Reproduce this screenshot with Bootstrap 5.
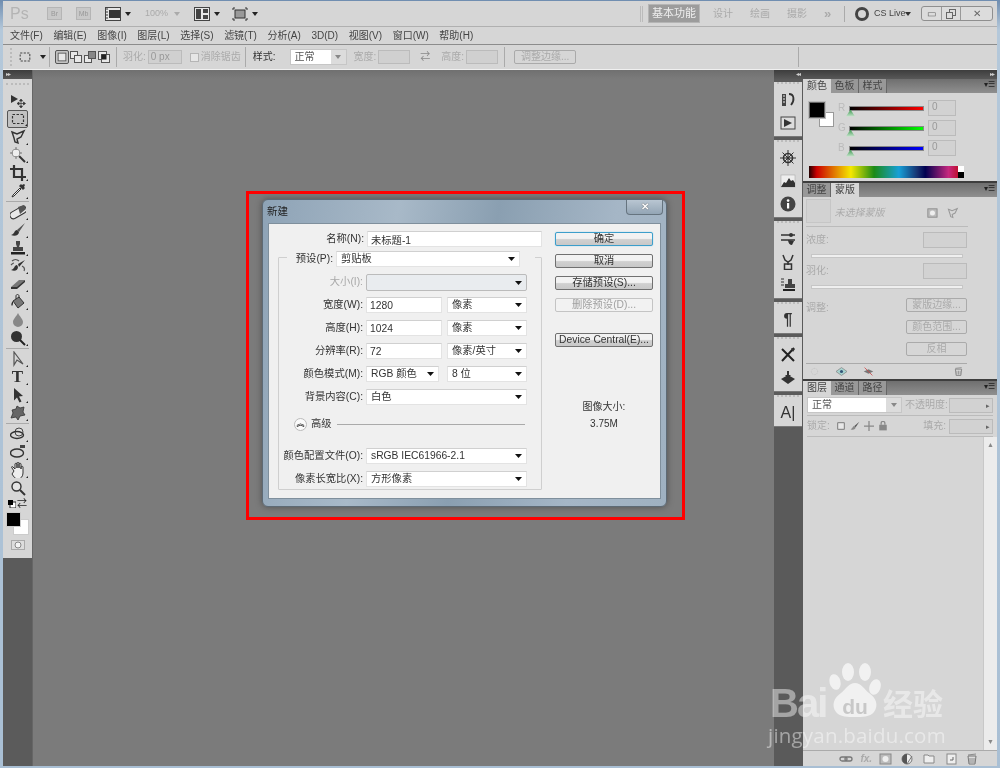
<!DOCTYPE html>
<html lang="zh-CN">
<head>
  <meta charset="UTF-8">
  <title>Photoshop CS5 - 新建</title>
  <link href="https://cdn.jsdelivr.net/npm/bootstrap@5.3.0/dist/css/bootstrap.min.css" rel="stylesheet">
  <style>
    html, body { margin: 0; height: 768px; overflow: hidden; background: #b9cadb; }
    body { font-family: "Liberation Sans", "Noto Sans CJK SC", sans-serif; font-size: 10px; line-height: 1.2; color: #333; }
    .ps-win { position: relative; width: 1000px; height: 768px; padding: 1px 3px 2px 3px; background: linear-gradient(#6f8db0, #b4c8da 30px, #a9bfd4); filter: blur(.3px); }

    /* top bars */
    .ps-app { height: 26px; background: #d6d6d6; border-bottom: 1px solid #b0b0b0; color: #aaa; padding-left: 7px; }
    .ps-logo { width: 33px; font-size: 16px; font-weight: 400; color: #b4b4b4; }
    .ps-mini { width: 15px; height: 13px; margin-right: 14px; border: 1px solid #b5b5b5; background: #c8c8c8; font-size: 7px; line-height: 11px; text-align: center; color: #999; }
    .ps-appic { width: 16px; height: 14px; margin-right: 4px; color: #444; }
    .ps-tri { width: 0; height: 0; border: 3px solid transparent; border-top: 4px solid #222; border-bottom: 0; }
    .ps-t1 { margin-right: 14px; }
    .ps-t1b { margin-right: 12px; }
    .ps-zoom { width: 22px; margin-right: 7px; color: #aaa; font-size: 9px; }
    .ps-t-gray { border-top-color: #aaa; margin-right: 14px; }
    .ps-grip { width: 3px; height: 16px; margin-right: 5px; border-left: 1px solid #bbb; border-right: 1px solid #bbb; }
    .ps-work { width: 52px; height: 19px; background: #9c9c9c; border: 1px solid #b5b5b5; color: #eee; font-size: 11px; line-height: 17px; text-align: center; margin-right: 13px; }
    .ps-wk2 { width: 37px; color: #aaa; font-size: 10px; }
    .ps-more { width: 20px; color: #aaa; font-size: 13px; font-weight: 700; }
    .ps-vsep { width: 1px; height: 16px; background: #aaa; }
    .ps-live-r { width: 14px; height: 14px; border: 3px solid #444; border-radius: 50%; margin: 0 5px 0 10px; }
    .ps-live { color: #444; width: 30px; font-size: 9px; white-space: nowrap; }
    .ps-live-t { margin: 0 10px 0 1px; border-top-color: #333; }
    .ps-ctl { width: 72px; height: 15px; margin-right: 4px; border: 1px solid #8f8f8f; border-radius: 3px; background: #dcdcdc; }
    .ps-ctl span { height: 100%; border-right: 1px solid #999; color: #666; }
    .ps-c1 { width: 20px; } .ps-c2 { width: 19px; } .ps-c3 { flex: 1; border-right: 0 !important; }

    .ps-menu { height: 17px; background: #d6d6d6; padding-left: 7px; color: #444; }
    .ps-menu span { margin-right: 10.6px; white-space: nowrap; }

    .ps-opts { height: 26px; background: #d6d6d6; border-top: 1px solid #8c8c8c; border-bottom: 1px solid #f0f0f0; color: #aaa; padding-left: 4px; }
    .ps-osep { width: 1px; height: 20px; background: #aaa; }
    .ps-og { width: 3px; height: 18px; margin: 0 5px 0 3px; border-left: 2px dotted #bbb; }
    .ps-ic14 { width: 14px; height: 14px; color: #444; }
    .ps-o1 { margin-right: 4px; }
    .ps-o2 { margin: 0 3px 0 4px; }
    .ps-o3 { margin-left: 5px; }
    .ps-mode { width: 14px; height: 14px; margin-right: 0; color: #555; }
    .ps-modeon { border: 1px solid #555; border-radius: 2px; background: #c3c3c3; }
    .ps-o4 { margin-left: 6px; margin-right: 2px; }
    .ps-ofield { width: 34px; height: 14px; border: 1px solid #bbb; background: #d0d0d0; padding-left: 2px; line-height: 12px; color: #999; }
    .ps-ocheck { width: 9px; height: 9px; margin: 0 2px 0 8px; border: 1px solid #b5b5b5; background: #e6e6e6; }
    .ps-o5 { margin-right: 4px; }
    .ps-dark { color: #333; margin: 0 14px 0 7px; }
    .ps-osel { width: 57px; height: 16px; border: 1px solid #c6c6c6; background: #fff; padding-left: 4px; line-height: 14px; color: #555; }
    .ps-selb { width: 15px; height: 14px; background: #dcdcdc; }
    .ps-selb .ps-tri { border-top-color: #888; }
    .ps-o6 { margin: 0 2px 0 7px; }
    .ps-obox { width: 32px; height: 14px; border: 1px solid #bbb; background: #d0d0d0; }
    .ps-swap { width: 10px; height: 10px; margin: 0 11px 0 10px; color: #888; }
    .ps-o7 { margin: 0 2px 0 0; }
    .ps-o8 { margin-left: 6px; }
    .ps-obtn { width: 62px; height: 14px; margin: 0 222px 0 9px; padding: 0; border: 1px solid #b9b9b9; border-radius: 2px; background: #e8e8e8; color: #999; font-size: 10px; line-height: 12px; --bs-btn-disabled-opacity: 1; }

    /* main area */
    .ps-main { flex: 1; min-height: 0; }
    .ps-head { height: 9px; background: linear-gradient(#3d3d3d, #585858); color: #ccc; font-size: 6px; line-height: 9px; padding: 0 3px; letter-spacing: -1px; }
    .ps-hl { margin-left: 19px; }
    .ps-tools { width: 29px; background: #5b5b5b; }
    .ps-tbody { height: 479px; background: #d6d6d6; padding-top: 1px; }
    .ps-tgrip { height: 8px; margin: 3px 3px 1px; border-top: 2px dotted #bbb; }
    .ps-tl { position: relative; height: 18px; color: #333; }
    .ps-tl svg { width: 16px; height: 16px; }
    .ps-tl::after { content: ""; position: absolute; right: 4px; bottom: 1px; border: 1.5px solid transparent; border-right-color: #222; border-bottom-color: #222; }
    .ps-tlon { margin: 0 4px; border: 1px solid #555; border-radius: 2px; background: #c2c2c2; }
    .ps-tlon::after { right: 0; }
    .ps-plain::after { display: none; }
    .ps-tt { font-family: "Liberation Serif", serif; font-size: 17px; font-weight: 700; }
    .ps-tsep { height: 1px; margin: 1px 3px 1px 3px; background: #aaa; }
    .ps-minis { height: 11px; margin-top: 1px; padding: 0 5px; color: #222; }
    .ps-swatch { position: relative; height: 28px; margin: 3px 0 0 3px; }
    .ps-fg { position: absolute; left: 0; top: 0; width: 15px; height: 15px; background: #000; border: 1px solid #ccc; z-index: 1; }
    .ps-bg { position: absolute; left: 7px; top: 7px; width: 16px; height: 16px; background: #fff; border: 1px solid #ccc; }
    .ps-qm { width: 14px; height: 10px; margin: 0 auto 0; border: 1px solid #aaa; background: #ddd; color: #777; }

    .ps-canvas { position: relative; flex: 1; background: #7b7b7b; border-left: 1px solid #666; }
    .ps-chead { height: 9px; background: linear-gradient(#707070, #7b7b7b); }

    /* dialog */
    .ps-dlg { position: absolute; left: 229px; top: 129px; width: 405px; height: 308px; padding: 23px 5px 7px 5px; border: 1px solid #5d6a75; border-radius: 6px; background: linear-gradient(100deg, #8ea3b6 0%, #a8b9c8 30%, #8a9fb1 52%, #a5b6c6 78%, #9fb1c1 100%); box-shadow: 0 0 6px rgba(40,40,40,.5); }
    .ps-dtitle { position: absolute; left: 4px; top: 5px; color: #222; font-size: 10.5px; }
    .ps-dclose { position: absolute; right: 3px; top: 0; width: 37px; height: 15px; border: 1px solid #66747f; border-top: 0; border-radius: 0 0 4px 4px; background: linear-gradient(#b9c6d2, #93a5b5); color: #fff; font-size: 10px; line-height: 13px; text-align: center; font-weight: 700; text-shadow: 0 0 1px #222; }
    .ps-dbody { height: 100%; background: #f0f0f0; border: 1px solid #7f8f9c; color: #333; font-size: 10.3px; }
    .ps-dleft { width: 286px; padding-top: 7px; }
    .ps-drow { height: 16px; margin-bottom: 7px; }
    .ps-lab { width: 98px; padding-right: 3px; text-align: right; white-space: nowrap; }
    .ps-in, .ps-sel { height: 16px; min-height: 16px; padding: 0 3px; border: 1px solid #e3e3e3; border-top-color: #d0d0d0; border-radius: 0; background-color: #fff; color: #333; font-size: 10.3px; line-height: 14px; box-shadow: none; }
    .ps-sel { padding: 0 14px 0 4px; background-image: url("data:image/svg+xml,%3Csvg xmlns='http://www.w3.org/2000/svg' viewBox='0 0 7 4'%3E%3Cpath d='M0 0h7L3.5 4z' fill='%23111'/%3E%3C/svg%3E"); background-position: right 4px center; background-size: 7px 4px; }
    .ps-w174 { width: 175px; }
    .ps-w161 { width: 161px; }
    .ps-w76 { width: 76px; }
    .ps-w80 { width: 80px; margin-left: 5px; }
    .ps-w73 { width: 73px; margin-right: 8px; }
    .ps-w184 { width: 184px; }
    .ps-dis { height: 17px; background-color: #e6e6e6; border: 1px solid #bbb; border-radius: 2px; opacity: 1; }
    .ps-gray { color: #a8a8a8; }
    .ps-group { position: relative; height: 233px; margin: 10px 0 0 9px; width: 264px; border: 1px solid #cfcfcf; border-radius: 1px; }
    .ps-glegend { margin: -7px 0 7px 8px; padding: 0; width: 248px; background: #f0f0f0; }
    .ps-glab { width: 49px; padding-right: 3px; text-align: right; white-space: nowrap; }
    .ps-group .ps-lab { width: 87px; }
    .ps-r1 { margin-bottom: 6px; height: 17px; }
    .ps-adv { height: 16px; margin: 11px 0 16px 15px; }
    .ps-advb { width: 13px; height: 13px; border: 1px solid #bbb; border-radius: 50%; background: #fafafa; font-size: 8px; line-height: 10px; text-align: center; font-weight: 700; color: #222; margin-right: 4px; }
    .ps-advl { width: 188px; height: 1px; margin-left: 5px; background: #aaa; }
    .ps-dright { width: 98px; padding-top: 8px; }
    .ps-dbtn { height: 14px; width: 98px; margin-bottom: 8px; padding: 0; border: 1px solid #707070; border-radius: 2px; background: linear-gradient(#f2f2f2 45%, #d0d0d0 55%, #c8c8c8); color: #333; font-size: 10.3px; line-height: 12px; white-space: nowrap; }
    .ps-dbtn:hover { background: #ddd; color: #333; }
    .ps-dok { border-color: #3c9ecb; box-shadow: 0 0 1px #58b5de; }
    .ps-doff, .ps-doff:disabled { border-color: #c4c4c4; background: #f2f2f2; color: #a0a0a0; opacity: 1; }
    .ps-d2 { margin-top: 13px; }
    .ps-dinfo { margin-top: 43px; text-align: center; font-size: 10px; line-height: 17px; }

    .ps-redbox { position: absolute; left: 213px; top: 121px; width: 439px; height: 329px; border: 3px solid #f00; }

    /* dock */
    .ps-side { width: 223px; background: #5a5a5a; }
    .ps-srow { flex: 1; min-height: 0; }
    .ps-dock { width: 28px; background: #5a5a5a; margin-left: 0; }
    .ps-dk { background: #d6d6d6; border-bottom: 1px solid #777; padding-bottom: 2px; }
    .ps-dkg { height: 3px; margin: 3px; border-top: 2px dotted #bbb; }
    .ps-dki { height: 23px; color: #333; }
    .ps-dki svg { width: 16px; height: 16px; }
    .ps-panels { width: 194px; margin-left: 1px; background: #d6d6d6; }
    .ps-ptabs { height: 14px; flex: none; background: linear-gradient(#6f6f6f, #8f8f8f); color: #333; }
    .ps-ptab { width: 28px; height: 14px; border-right: 1px solid #666; background: #989898; text-align: center; font-size: 10px; line-height: 13px; color: #444; }
    .ps-ptabon { background: #d6d6d6; border-right: 0; }
    .ps-menuic { margin: 0 2px 0 auto; color: #222; font-size: 8px; line-height: 12px; }
    .ps-cbody { height: 90px; flex: none; padding: 5px 0 0 6px; border-bottom: 2px solid #3e3e3e; }
    .ps-cswatch { position: relative; width: 29px; height: 25px; margin-top: 4px; }
    .ps-cfg { position: absolute; left: 0; top: 0; width: 16px; height: 16px; background: #000; border: 1px solid #666; z-index: 1; box-shadow: 0 0 0 1px #bbb; }
    .ps-cbg { position: absolute; left: 10px; top: 10px; width: 15px; height: 15px; background: #fff; border: 1px solid #999; }
    .ps-crow { height: 20px; }
    .ps-clab { width: 11px; color: #bbb; text-align: left; }
    .ps-slide { position: relative; width: 75px; height: 5px; border: 1px solid #888; margin-right: 4px; }
    .ps-sr { background: linear-gradient(90deg, #000, #f00); }
    .ps-sg { background: linear-gradient(90deg, #000, #0f0); }
    .ps-sb { background: linear-gradient(90deg, #000, #00f); }
    .ps-thumb { position: absolute; left: -4px; top: 3px; width: 9px; height: 7px; background: linear-gradient(#3f9a52, #cfe9d4); clip-path: polygon(50% 0, 100% 100%, 0 100%); }
    .ps-cbox { width: 28px; height: 16px; border: 1px solid #bbb; background: #d2d2d2; color: #999; padding-left: 3px; line-height: 12px; font-size: 10px; }
    .ps-spec { position: relative; width: 155px; height: 12px; margin-top: 8px; background: linear-gradient(90deg, #200 0, #c00 5%, #e8a000 20%, #f5e800 27%, #1c8a16 42%, #16a0d8 58%, #16306f 70%, #000050 75%, #c6287f 90%, #b00 100%); }
    .ps-spec::after { content: ""; position: absolute; right: 0; top: 0; width: 6px; height: 100%; background: linear-gradient(#fff 50%, #000 50%); }
    .ps-mbody { height: 184px; flex: none; padding: 2px 0 0 3px; border-bottom: 2px solid #3e3e3e; color: #aaa; }
    .ps-mtop2 { height: 28px; margin-right: 29px; border-bottom: 1px solid #bbb; }
    .ps-mthumb { width: 25px; height: 24px; border: 1px solid #c6c6c6; background: #d2d2d2; margin-right: 4px; }
    .ps-mtext { width: 94px; font-style: italic; color: #aaa; }
    .ps-mic { width: 12px; height: 12px; margin-right: 9px; color: #999; }
    .ps-mrow { height: 16px; margin-top: 5px; width: 161px; }
    .ps-mbox { width: 44px; height: 16px; border: 1px solid #bbb; background: #d2d2d2; }
    .ps-mslide { height: 4px; width: 152px; margin: 6px 0 0 5px; background: #efefef; border: 1px solid #c6c6c6; }
    .ps-mbtns { width: 161px; height: 66px; margin-top: 9px; }
    .ps-mbtn { width: 61px; height: 14px; margin-bottom: 8px; padding: 0; border: 1px solid #bbb; border-radius: 2px; background: #e8e8e8; color: #999; font-size: 10px; line-height: 12px; --bs-btn-disabled-opacity: 1; }
    .ps-mfoot { height: 16px; width: 161px; border-top: 1px solid #aaa; margin-top: -1px; padding: 0 3px; }
    .ps-mfoot svg { width: 11px; height: 11px; }
    .ps-lbody { flex: 1; min-height: 0; color: #aaa; }
    .ps-lrow { height: 21px; flex: none; margin: 0 4px; border-bottom: 1px solid #bbb; white-space: nowrap; }
    .ps-lsel { width: 95px; height: 16px; flex: none; border: 1px solid #c6c6c6; background: #fff; padding-left: 4px; color: #555; line-height: 14px; margin-right: 3px; }
    .ps-lfield { width: 44px; height: 15px; flex: none; border: 1px solid #bbb; background: #d2d2d2; margin-left: auto; text-align: right; color: #666; font-size: 7px; line-height: 13px; padding-right: 2px; }
    .ps-llock { margin-right: 6px; }
    .ps-lic { width: 10px; height: 10px; margin-right: 4px; color: #888; }
    .ps-lr { margin-left: auto; }
    .ps-lr + .ps-lfield { margin-left: 3px; }
    .ps-list { flex: 1; min-height: 0; }
    .ps-lmain { flex: 1; }
    .ps-scroll { width: 14px; background: #ececec; border-left: 1px solid #c8c8c8; color: #888; font-size: 7px; text-align: center; }
    .ps-lfoot { height: 16px; flex: none; border-top: 1px solid #aaa; padding: 0 18px 0 36px; }
    .ps-lfoot svg { width: 14px; height: 12px; color: #777; }

    /* baidu watermark */
    .ps-wm { position: absolute; left: 770px; top: 656px; width: 180px; height: 94px; color: rgba(255,255,255,.45); pointer-events: none; z-index: 5; font-family: "Open Sans", "Noto Sans CJK SC", sans-serif; }
    .ps-wm1 { height: 66px; }
    .ps-bai { width: 56px; height: 38px; font-size: 40px; font-weight: 700; line-height: 38px; letter-spacing: -2px; font-family: "Liberation Sans", sans-serif; margin-top: 28px; white-space: nowrap; }
    .ps-paw { width: 56px; height: 66px; flex: none; }
    .ps-jy { font-size: 30px; line-height: 40px; margin: 26px 0 0 1px; font-family: "Noto Sans CJK SC", sans-serif; font-weight: 700; white-space: nowrap; }
    .ps-wm2 { font-size: 20.5px; line-height: 26px; margin: 0 0 0 -2px; letter-spacing: .2px; white-space: nowrap; }
  </style>
</head>
<body>
<svg width="0" height="0" class="d-none">
  <defs>
    <symbol id="i-move" viewBox="0 0 16 16"><path d="M1 2l7 4-7 4z" fill="currentColor"/><path d="M11 7v7M8 10.500h7M11 6l-1.500 2h3zM11 15l-1.500-2h3zM7 10.500l2-1.500v3zM15.500 10.500l-2-1.500v3z" stroke="currentColor" fill="currentColor" stroke-width=".7"/></symbol>
    <symbol id="i-marq" viewBox="0 0 16 16"><rect x="2.500" y="3.500" width="11" height="9" fill="none" stroke="currentColor" stroke-width="1.200" stroke-dasharray="2.500 1.500"/></symbol>
    <symbol id="i-lasso" viewBox="0 0 16 16"><path d="M2 3l5 2 7-3-3 6-4 2 1 4-3-1-1-4z" fill="none" stroke="currentColor" stroke-width="1.400"/></symbol>
    <symbol id="i-wand" viewBox="0 0 16 16"><path d="M9 9l6 6" stroke="currentColor" stroke-width="2"/><circle cx="6" cy="6" r="4" fill="#eee" stroke="#999"/><path d="M6 0v3M6 9v3M0 6h3M9 6h3" stroke="#777"/></symbol>
    <symbol id="i-crop" viewBox="0 0 16 16"><path d="M4 0v12h12M0 4h12v12" fill="none" stroke="currentColor" stroke-width="2.200"/></symbol>
    <symbol id="i-drop" viewBox="0 0 16 16"><path d="M10 5l-7 7-1 2 2-1 7-7z" fill="#eee" stroke="currentColor"/><path d="M9 3l4 4 2-2-1-1 1-2-1-1-2 1-1-1z" fill="currentColor"/></symbol>
    <symbol id="i-heal" viewBox="0 0 16 16"><rect x="-1" y="5" width="18" height="7" rx="3.500" transform="rotate(-30 8 8)" fill="#e8e8e8" stroke="currentColor"/><path d="M8 3l6-2 2 4-6 5z" fill="#555"/></symbol>
    <symbol id="i-brush" viewBox="0 0 16 16"><path d="M15 1L7 8l2 2z" fill="#555"/><path d="M7 8c-3 0-2 4-6 5 4 2 8 0 8-3z" fill="currentColor"/></symbol>
    <symbol id="i-stamp" viewBox="0 0 16 16"><path d="M6 1h4v3l-1 3h4v4H3V7h4L6 4z" fill="#444"/><rect x="1" y="12" width="14" height="2.500" fill="#222"/></symbol>
    <symbol id="i-hist" viewBox="0 0 16 16"><path d="M15 2L8 6l1 3zM7 7c-3 0-2 4-6 5 4 2 7 0 7-3z" fill="currentColor"/><path d="M2 3c2-2 5-2 7 0M1 7c1-1 2-2 3-2M12 8c2 1 3 3 2 5" fill="none" stroke="#555" stroke-width="1.200"/></symbol>
    <symbol id="i-erase" viewBox="0 0 16 16"><path d="M1 11l8-7h6l-8 8H1z" fill="#777"/><path d="M1 11h6v2H1zM7 11l8-7v2l-8 7z" fill="#333"/></symbol>
    <symbol id="i-buck" viewBox="0 0 16 16"><path d="M3 7l6-4 5 6-6 5z" fill="#777" stroke="#333"/><path d="M3 7c-2 2-2 4-1 5 1-1 1-3 1-5z" fill="#222"/><path d="M6 5V2c0-2 3-2 3 0v2" fill="none" stroke="#333"/></symbol>
    <symbol id="i-blur" viewBox="0 0 16 16"><path d="M8 1c2 4 5 6 5 9a5 5 0 0 1-10 0c0-3 3-5 5-9z" fill="#888"/></symbol>
    <symbol id="i-dodge" viewBox="0 0 16 16"><circle cx="6.500" cy="6.500" r="5.500" fill="#333"/><path d="M10 10l5 5" stroke="#222" stroke-width="2"/></symbol>
    <symbol id="i-pen" viewBox="0 0 16 16"><path d="M4 1v13l3-5 6 4z" fill="none" stroke="#555" stroke-width="1.200"/></symbol>
    <symbol id="i-arrow" viewBox="0 0 16 16"><path d="M4 1l9 8-4 .5 2.500 5-2 1-2.500-5-3 3z" fill="currentColor"/></symbol>
    <symbol id="i-shape" viewBox="0 0 16 16"><path d="M7 1l3 2 4-1-1 5 2 3-5 1-2 4-2-3-5 1 2-5-1-3 4-1z" fill="#666" stroke="#333" stroke-width=".8"/></symbol>
    <symbol id="i-rot" viewBox="0 0 16 16"><circle cx="9" cy="6" r="4" fill="#ddd" stroke="#444"/><ellipse cx="7" cy="9" rx="6.500" ry="3.500" fill="none" stroke="#333" stroke-width="1.400"/></symbol>
    <symbol id="i-orb" viewBox="0 0 16 16"><ellipse cx="7" cy="9" rx="6.500" ry="4" fill="none" stroke="#333" stroke-width="1.400"/><path d="M10 1h5v3h-5z" fill="#444"/></symbol>
    <symbol id="i-hand" viewBox="0 0 16 16"><path d="M4 9L2 6c-1-1 0-2 1-1l2 2V2c0-1 2-1 2 0v4-5c0-1 2-1 2 0v5-4c0-1 2-1 2 0v5-2c0-1 2-1 2 0v6c0 3-2 6-5 6-3 0-4-2-6-5z" fill="#eee" stroke="#333" stroke-width="1"/></symbol>
    <symbol id="i-zoom" viewBox="0 0 16 16"><circle cx="6.500" cy="6.500" r="4.500" fill="#e4e4e4" stroke="#333" stroke-width="1.400"/><path d="M10 10l5 5" stroke="#333" stroke-width="2"/></symbol>
    <symbol id="i-book" viewBox="0 0 16 16"><path d="M2 2h4v12H2z" fill="#444"/><path d="M3 4h2M3 7h2M3 10h2" stroke="#eee"/><path d="M9 2c5 0 6 6 2 11" fill="none" stroke="#333" stroke-width="1.800"/></symbol>
    <symbol id="i-play" viewBox="0 0 16 16"><rect x="1" y="2" width="14" height="12" fill="#ddd" stroke="#444"/><path d="M4 4l8 4-8 4z" fill="#333"/></symbol>
    <symbol id="i-wheel" viewBox="0 0 16 16"><circle cx="8" cy="8" r="4.500" fill="none" stroke="#333" stroke-width="1.600"/><path d="M8 0v16M0 8h16M2.500 2.500l11 11M13.500 2.500l-11 11" stroke="#333"/><circle cx="8" cy="8" r="1.500" fill="#333"/></symbol>
    <symbol id="i-histo" viewBox="0 0 16 16"><rect x="1" y="2" width="14" height="12" fill="#eee" stroke="#aaa" stroke-width=".6"/><path d="M1 14l3-5 2 1 3-5 2 3 2-1 2 3v4z" fill="#333"/></symbol>
    <symbol id="i-info" viewBox="0 0 16 16"><circle cx="8" cy="8" r="7.500" fill="#444"/><rect x="7" y="7" width="2.200" height="5.500" fill="#fff"/><circle cx="8.100" cy="4.600" r="1.300" fill="#fff"/></symbol>
    <symbol id="i-sliders" viewBox="0 0 16 16"><path d="M1 4h14M1 9h14" stroke="#333" stroke-width="1.500"/><circle cx="11" cy="4" r="2" fill="#333"/><path d="M8 9l6 1-2 4c-2 0-4-2-4-5z" fill="#333"/></symbol>
    <symbol id="i-usb" viewBox="0 0 16 16"><path d="M3 1l2 5 3 2 3-2 2-5M8 8v3" fill="none" stroke="#333" stroke-width="1.500"/><rect x="4.500" y="10" width="7" height="5.500" fill="none" stroke="#333" stroke-width="1.500"/></symbol>
    <symbol id="i-stamp2" viewBox="0 0 16 16"><path d="M1 2h3M1 5h3M1 8h3" stroke="#333"/><path d="M8 2h4v5h3v4H5V7h3z" fill="#444"/><rect x="3" y="12" width="12" height="2" fill="#222"/></symbol>
    <symbol id="i-tools" viewBox="0 0 16 16"><path d="M2 2l12 12M14 1L2 14" stroke="#222" stroke-width="2"/><path d="M11 1l4 1-2 3z" fill="#333"/></symbol>
    <symbol id="i-box" viewBox="0 0 16 16"><path d="M1 9l7-4 7 4-7 5z" fill="#333"/><path d="M8 1v7" stroke="#333" stroke-width="2"/><path d="M5 5l3 3 3-3" fill="#333"/></symbol>
    <symbol id="i-film" viewBox="0 0 16 14"><rect x=".5" y=".5" width="15" height="13" fill="#e6e6e6" stroke="currentColor"/><path d="M4 3h11v8H4z" fill="#333"/><path d="M1 2h2M1 5h2M1 8h2M1 11h2" stroke="#333"/></symbol>
    <symbol id="i-arr" viewBox="0 0 16 14"><rect x=".5" y=".5" width="15" height="13" fill="#e6e6e6" stroke="currentColor"/><path d="M2 2h5v10H2zM9 2h5v4H9zM9 8h5v4H9z" fill="#444"/></symbol>
    <symbol id="i-scr" viewBox="0 0 16 14"><rect x="3" y="3" width="10" height="8" fill="#999" stroke="#333"/><path d="M1 3V1h2M13 1h2v2M15 11v2h-2M3 13H1v-2" fill="none" stroke="#333"/></symbol>
    <symbol id="i-restore" viewBox="0 0 10 10"><rect x="3.500" y=".5" width="6" height="6" fill="none" stroke="currentColor"/><rect x=".5" y="3.500" width="6" height="6" fill="#ddd" stroke="currentColor"/></symbol>
    <symbol id="i-md1" viewBox="0 0 14 14"><rect x="2.500" y="2.500" width="9" height="9" fill="#e8e8e8" stroke="#555"/></symbol>
    <symbol id="i-md2" viewBox="0 0 14 14"><rect x="1.500" y="1.500" width="7" height="7" fill="#e8e8e8" stroke="#555"/><rect x="5.500" y="5.500" width="7" height="7" fill="#e8e8e8" stroke="#555"/></symbol>
    <symbol id="i-md3" viewBox="0 0 14 14"><rect x="1.500" y="5.500" width="7" height="7" fill="#e8e8e8" stroke="#555"/><rect x="5.500" y="1.500" width="7" height="7" fill="#888" stroke="#555"/></symbol>
    <symbol id="i-md4" viewBox="0 0 14 14"><rect x="1.500" y="1.500" width="8" height="8" fill="#e8e8e8" stroke="#555"/><rect x="4.500" y="4.500" width="8" height="8" fill="#e8e8e8" stroke="#555"/><rect x="4.500" y="4.500" width="5" height="5" fill="#222"/></symbol>
    <symbol id="i-link" viewBox="0 0 14 12"><rect x="1" y="4" width="7" height="4" rx="2" fill="none" stroke="#777" stroke-width="1.300"/><rect x="6" y="4" width="7" height="4" rx="2" fill="none" stroke="#777" stroke-width="1.300"/></symbol>
    <symbol id="i-mask" viewBox="0 0 14 12"><rect x="1" y="1" width="11" height="10" fill="#bbb" stroke="#888"/><circle cx="6.500" cy="6" r="3" fill="#eee"/></symbol>
    <symbol id="i-half" viewBox="0 0 14 12"><circle cx="6" cy="6" r="5" fill="#eee" stroke="#777"/><path d="M6 1a5 5 0 0 0 0 10z" fill="#555"/><path d="M6 11L11 3" stroke="#777"/></symbol>
    <symbol id="i-fold" viewBox="0 0 14 12"><path d="M2 2h4l1 1h5v7H2z" fill="#eee" stroke="#888"/></symbol>
    <symbol id="i-new" viewBox="0 0 14 12"><rect x="3" y="1" width="9" height="10" fill="#eee" stroke="#888"/><path d="M6 7h3V4" fill="none" stroke="#666"/></symbol>
    <symbol id="i-trash" viewBox="0 0 14 12"><path d="M3 3h8l-1 8H4z" fill="#ddd" stroke="#777"/><path d="M3 2l8-1M5 5v5M7 5v5M9 5v5" stroke="#777" stroke-width=".8"/></symbol>
  </defs>
</svg>

<div class="ps-win d-flex flex-column">
  <div class="ps-app d-flex align-items-center">
    <div class="ps-logo">Ps</div>
    <div class="ps-mini ms-1">Br</div>
    <div class="ps-mini">Mb</div>
    <svg class="ps-appic"><use href="#i-film"/></svg><i class="ps-tri ps-t1"></i>
    <span class="ps-zoom">100%</span><i class="ps-tri ps-t-gray"></i>
    <svg class="ps-appic"><use href="#i-arr"/></svg><i class="ps-tri ps-t1b"></i>
    <svg class="ps-appic"><use href="#i-scr"/></svg><i class="ps-tri"></i>
    <i class="ps-grip ms-auto"></i>
    <div class="ps-work">基本功能</div>
    <span class="ps-wk2">设计</span><span class="ps-wk2">绘画</span><span class="ps-wk2">摄影</span>
    <span class="ps-more">»</span>
    <i class="ps-vsep"></i>
    <i class="ps-live-r"></i><span class="ps-live">CS Live</span><i class="ps-tri ps-live-t"></i>
    <div class="ps-ctl d-flex">
      <span class="ps-c1 d-flex align-items-center justify-content-center">▭</span>
      <span class="ps-c2 d-flex align-items-center justify-content-center"><svg width="10" height="10"><use href="#i-restore"/></svg></span>
      <span class="ps-c3 d-flex align-items-center justify-content-center">✕</span>
    </div>
  </div>

  <div class="ps-menu d-flex align-items-center">
    <span>文件(F)</span><span>编辑(E)</span><span>图像(I)</span><span>图层(L)</span><span>选择(S)</span><span>滤镜(T)</span><span>分析(A)</span><span>3D(D)</span><span>视图(V)</span><span>窗口(W)</span><span>帮助(H)</span>
  </div>

  <div class="ps-opts d-flex align-items-center">
    <i class="ps-og"></i>
    <svg class="ps-ic14 ps-o1"><use href="#i-marq"/></svg><i class="ps-tri ps-o2"></i>
    <i class="ps-osep"></i>
    <svg class="ps-mode ps-modeon ps-o3"><use href="#i-md1"/></svg><svg class="ps-mode"><use href="#i-md2"/></svg><svg class="ps-mode"><use href="#i-md3"/></svg><svg class="ps-mode"><use href="#i-md4"/></svg>
    <i class="ps-osep ps-o3"></i>
    <span class="ps-o4">羽化:</span><div class="ps-ofield">0 px</div>
    <i class="ps-ocheck"></i><span class="ps-o5">消除锯齿</span>
    <i class="ps-osep"></i>
    <span class="ps-dark">样式:</span>
    <div class="ps-osel d-flex justify-content-between"><span>正常</span><span class="ps-selb d-flex align-items-center justify-content-center"><i class="ps-tri"></i></span></div>
    <span class="ps-o6">宽度:</span><div class="ps-obox"></div>
    <span class="ps-swap d-flex align-items-center">⇄</span>
    <span class="ps-o7">高度:</span><div class="ps-obox"></div>
    <i class="ps-osep ps-o8"></i>
    <button class="btn ps-obtn" disabled>调整边缘...</button>
    <i class="ps-osep"></i>
  </div>

  <div class="ps-main d-flex">
    <div class="ps-tools">
      <div class="ps-head">▸▸</div>
      <div class="ps-tbody">
        <div class="ps-tgrip"></div>
        <div class="ps-tl ps-plain d-flex align-items-center justify-content-center"><svg><use href="#i-move"/></svg></div>
        <div class="ps-tl ps-tlon d-flex align-items-center justify-content-center"><svg><use href="#i-marq"/></svg></div>
        <div class="ps-tl d-flex align-items-center justify-content-center"><svg><use href="#i-lasso"/></svg></div>
        <div class="ps-tl d-flex align-items-center justify-content-center"><svg><use href="#i-wand"/></svg></div>
        <div class="ps-tl d-flex align-items-center justify-content-center"><svg><use href="#i-crop"/></svg></div>
        <div class="ps-tl d-flex align-items-center justify-content-center"><svg><use href="#i-drop"/></svg></div>
        <div class="ps-tsep"></div>
        <div class="ps-tl d-flex align-items-center justify-content-center"><svg><use href="#i-heal"/></svg></div>
        <div class="ps-tl d-flex align-items-center justify-content-center"><svg><use href="#i-brush"/></svg></div>
        <div class="ps-tl d-flex align-items-center justify-content-center"><svg><use href="#i-stamp"/></svg></div>
        <div class="ps-tl d-flex align-items-center justify-content-center"><svg><use href="#i-hist"/></svg></div>
        <div class="ps-tl d-flex align-items-center justify-content-center"><svg><use href="#i-erase"/></svg></div>
        <div class="ps-tl d-flex align-items-center justify-content-center"><svg><use href="#i-buck"/></svg></div>
        <div class="ps-tl d-flex align-items-center justify-content-center"><svg><use href="#i-blur"/></svg></div>
        <div class="ps-tl d-flex align-items-center justify-content-center"><svg><use href="#i-dodge"/></svg></div>
        <div class="ps-tsep"></div>
        <div class="ps-tl d-flex align-items-center justify-content-center"><svg><use href="#i-pen"/></svg></div>
        <div class="ps-tl ps-tt d-flex align-items-center justify-content-center">T</div>
        <div class="ps-tl d-flex align-items-center justify-content-center"><svg><use href="#i-arrow"/></svg></div>
        <div class="ps-tl d-flex align-items-center justify-content-center"><svg><use href="#i-shape"/></svg></div>
        <div class="ps-tsep"></div>
        <div class="ps-tl d-flex align-items-center justify-content-center"><svg><use href="#i-rot"/></svg></div>
        <div class="ps-tl d-flex align-items-center justify-content-center"><svg><use href="#i-orb"/></svg></div>
        <div class="ps-tl d-flex align-items-center justify-content-center"><svg><use href="#i-hand"/></svg></div>
        <div class="ps-tl ps-plain d-flex align-items-center justify-content-center"><svg><use href="#i-zoom"/></svg></div>
        <div class="ps-minis d-flex justify-content-between align-items-center"><svg width="8" height="8"><rect x="2" y="2" width="6" height="6" fill="#fff" stroke="#222"/><rect width="5" height="5" fill="#000"/></svg><span>⇄</span></div>
        <div class="ps-swatch"><div class="ps-fg"></div><div class="ps-bg"></div></div>
        <div class="ps-qm d-flex align-items-center justify-content-center"><svg width="8" height="8"><circle cx="4" cy="4" r="3" fill="#f4f4f4" stroke="#888"/></svg></div>
      </div>
    </div>

    <div class="ps-canvas">
      <div class="ps-chead"></div>
      <div class="ps-dlg">
        <div class="ps-dtitle">新建</div>
        <div class="ps-dclose">✕</div>
        <div class="ps-dbody d-flex">
          <div class="ps-dleft">
            <div class="ps-drow d-flex align-items-center"><label class="ps-lab">名称(N):</label><input class="form-control ps-in ps-w174" value="未标题-1"></div>
            <div class="ps-group">
              <div class="ps-glegend d-flex align-items-center"><label class="ps-glab">预设(P):</label><select class="form-select ps-sel ps-w184"><option>剪贴板</option></select></div>
              <div class="ps-drow ps-r1 d-flex align-items-center"><label class="ps-lab ps-gray">大小(I):</label><select class="form-select ps-sel ps-dis ps-w161" disabled><option></option></select></div>
              <div class="ps-drow d-flex align-items-center"><label class="ps-lab">宽度(W):</label><input class="form-control ps-in ps-w76" value="1280"><select class="form-select ps-sel ps-w80"><option>像素</option></select></div>
              <div class="ps-drow d-flex align-items-center"><label class="ps-lab">高度(H):</label><input class="form-control ps-in ps-w76" value="1024"><select class="form-select ps-sel ps-w80"><option>像素</option></select></div>
              <div class="ps-drow d-flex align-items-center"><label class="ps-lab">分辨率(R):</label><input class="form-control ps-in ps-w76" value="72"><select class="form-select ps-sel ps-w80"><option>像素/英寸</option></select></div>
              <div class="ps-drow d-flex align-items-center"><label class="ps-lab">颜色模式(M):</label><select class="form-select ps-sel ps-w73"><option>RGB 颜色</option></select><select class="form-select ps-sel ps-w80 ms-0"><option>8 位</option></select></div>
              <div class="ps-drow d-flex align-items-center"><label class="ps-lab">背景内容(C):</label><select class="form-select ps-sel ps-w161"><option>白色</option></select></div>
              <div class="ps-adv d-flex align-items-center"><span class="ps-advb">︽</span><span>高级</span><i class="ps-advl"></i></div>
              <div class="ps-drow d-flex align-items-center"><label class="ps-lab">颜色配置文件(O):</label><select class="form-select ps-sel ps-w161"><option>sRGB IEC61966-2.1</option></select></div>
              <div class="ps-drow d-flex align-items-center"><label class="ps-lab">像素长宽比(X):</label><select class="form-select ps-sel ps-w161"><option>方形像素</option></select></div>
            </div>
          </div>
          <div class="ps-dright d-flex flex-column">
            <button class="btn ps-dbtn ps-dok">确定</button>
            <button class="btn ps-dbtn">取消</button>
            <button class="btn ps-dbtn">存储预设(S)...</button>
            <button class="btn ps-dbtn ps-doff" disabled>删除预设(D)...</button>
            <button class="btn ps-dbtn ps-d2">Device Central(E)...</button>
            <div class="ps-dinfo">图像大小:<br>3.75M</div>
          </div>
        </div>
      </div>
      <div class="ps-redbox"></div>
    </div>

    <div class="ps-side d-flex flex-column">
      <div class="ps-head d-flex justify-content-between"><span class="ps-hl">◂◂</span><span>▸▸</span></div>
      <div class="ps-srow d-flex">
        <div class="ps-dock">
          <div class="ps-dk"><div class="ps-dkg"></div>
            <div class="ps-dki d-flex align-items-center justify-content-center"><svg><use href="#i-book"/></svg></div>
            <div class="ps-dki d-flex align-items-center justify-content-center"><svg><use href="#i-play"/></svg></div>
          </div>
          <div class="ps-dk"><div class="ps-dkg"></div>
            <div class="ps-dki d-flex align-items-center justify-content-center"><svg><use href="#i-wheel"/></svg></div>
            <div class="ps-dki d-flex align-items-center justify-content-center"><svg><use href="#i-histo"/></svg></div>
            <div class="ps-dki d-flex align-items-center justify-content-center"><svg><use href="#i-info"/></svg></div>
          </div>
          <div class="ps-dk"><div class="ps-dkg"></div>
            <div class="ps-dki d-flex align-items-center justify-content-center"><svg><use href="#i-sliders"/></svg></div>
            <div class="ps-dki d-flex align-items-center justify-content-center"><svg><use href="#i-usb"/></svg></div>
            <div class="ps-dki d-flex align-items-center justify-content-center"><svg><use href="#i-stamp2"/></svg></div>
          </div>
          <div class="ps-dk"><div class="ps-dkg"></div>
            <div class="ps-dki d-flex align-items-center justify-content-center fs-6 fw-bold">¶</div>
          </div>
          <div class="ps-dk"><div class="ps-dkg"></div>
            <div class="ps-dki d-flex align-items-center justify-content-center"><svg><use href="#i-tools"/></svg></div>
            <div class="ps-dki d-flex align-items-center justify-content-center"><svg><use href="#i-box"/></svg></div>
          </div>
          <div class="ps-dk"><div class="ps-dkg"></div>
            <div class="ps-dki d-flex align-items-center justify-content-center fs-6">A|</div>
          </div>
        </div>

        <div class="ps-panels d-flex flex-column">
          <div class="ps-ptabs d-flex">
            <div class="ps-ptab ps-ptabon">颜色</div><div class="ps-ptab">色板</div><div class="ps-ptab">样式</div>
            <span class="ps-menuic">▾☰</span>
          </div>
          <div class="ps-cbody">
            <div class="d-flex">
              <div class="ps-cswatch"><div class="ps-cfg"></div><div class="ps-cbg"></div></div>
              <div>
                <div class="ps-crow d-flex align-items-center"><span class="ps-clab">R</span><div class="ps-slide ps-sr"><i class="ps-thumb"></i></div><div class="ps-cbox">0</div></div>
                <div class="ps-crow d-flex align-items-center"><span class="ps-clab">G</span><div class="ps-slide ps-sg"><i class="ps-thumb"></i></div><div class="ps-cbox">0</div></div>
                <div class="ps-crow d-flex align-items-center"><span class="ps-clab">B</span><div class="ps-slide ps-sb"><i class="ps-thumb"></i></div><div class="ps-cbox">0</div></div>
              </div>
            </div>
            <div class="ps-spec"></div>
          </div>

          <div class="ps-ptabs d-flex">
            <div class="ps-ptab">调整</div><div class="ps-ptab ps-ptabon">蒙版</div>
            <span class="ps-menuic">▾☰</span>
          </div>
          <div class="ps-mbody">
            <div class="ps-mtop2 d-flex align-items-start">
              <div class="ps-mthumb"></div><span class="ps-mtext mt-2">未选择蒙版</span>
              <svg class="ps-mic mt-2"><use href="#i-mask"/></svg><svg class="ps-mic mt-2"><use href="#i-lasso"/></svg>
            </div>
            <div class="ps-mrow d-flex justify-content-between align-items-center"><span>浓度:</span><div class="ps-mbox"></div></div>
            <div class="ps-mslide"></div>
            <div class="ps-mrow d-flex justify-content-between align-items-center"><span>羽化:</span><div class="ps-mbox"></div></div>
            <div class="ps-mslide"></div>
            <div class="ps-mbtns d-flex justify-content-between">
              <span class="mt-1">调整:</span>
              <div class="d-flex flex-column">
                <button class="btn ps-mbtn" disabled>蒙版边缘...</button>
                <button class="btn ps-mbtn" disabled>颜色范围...</button>
                <button class="btn ps-mbtn" disabled>反相</button>
              </div>
            </div>
            <div class="ps-mfoot d-flex align-items-center gap-3">
              <svg viewBox="0 0 14 12"><circle cx="7" cy="6" r="4" fill="none" stroke="#bbb" stroke-dasharray="1 1"/></svg>
              <svg viewBox="0 0 14 12"><path d="M0 6l7-5 7 5-7 5z" fill="#a8d4d0" stroke="#888"/><circle cx="7" cy="6" r="2" fill="#357"/></svg>
              <svg viewBox="0 0 14 12"><path d="M1 6l6-3 6 3-6 3z" fill="#777"/><path d="M2 1l10 10" stroke="#c44"/></svg>
              <svg class="ms-auto" viewBox="0 0 14 12"><use href="#i-trash"/></svg>
            </div>
          </div>

          <div class="ps-ptabs d-flex">
            <div class="ps-ptab ps-ptabon">图层</div><div class="ps-ptab">通道</div><div class="ps-ptab">路径</div>
            <span class="ps-menuic">▾☰</span>
          </div>
          <div class="ps-lbody d-flex flex-column">
            <div class="ps-lrow d-flex align-items-center">
              <div class="ps-lsel d-flex justify-content-between"><span>正常</span><span class="ps-selb d-flex align-items-center justify-content-center"><i class="ps-tri"></i></span></div>
              <span>不透明度:</span><div class="ps-lfield">▸</div>
            </div>
            <div class="ps-lrow d-flex align-items-center">
              <span class="ps-llock">锁定:</span>
              <svg class="ps-lic" viewBox="0 0 14 14"><use href="#i-md1"/></svg>
              <svg class="ps-lic" viewBox="0 0 16 16"><use href="#i-brush"/></svg>
              <svg class="ps-lic" viewBox="0 0 16 16"><path d="M8 0v16M0 8h16" stroke="currentColor" stroke-width="2"/></svg>
              <svg class="ps-lic" viewBox="0 0 16 16"><rect x="2" y="6" width="12" height="9" fill="currentColor"/><path d="M5 6V3c0-3 6-3 6 0v3" fill="none" stroke="currentColor" stroke-width="2"/></svg>
              <span class="ps-lr">填充:</span><div class="ps-lfield">▸</div>
            </div>
            <div class="ps-list d-flex">
              <div class="ps-lmain"></div>
              <div class="ps-scroll d-flex flex-column justify-content-between pt-1 pb-1"><span>▲</span><span>▼</span></div>
            </div>
            <div class="ps-lfoot d-flex align-items-center justify-content-between">
              <svg><use href="#i-link"/></svg>
              <span class="fst-italic fw-bold">fx.</span>
              <svg><use href="#i-mask"/></svg>
              <svg><use href="#i-half"/></svg>
              <svg><use href="#i-fold"/></svg>
              <svg><use href="#i-new"/></svg>
              <svg><use href="#i-trash"/></svg>
            </div>
          </div>
        </div>
      </div>
    </div>
  </div>

  <div class="ps-wm">
    <div class="ps-wm1 d-flex">
      <span class="ps-bai">Bai</span>
      <svg class="ps-paw" viewBox="0 0 56 66">
        <ellipse cx="9" cy="26" rx="5.500" ry="8" transform="rotate(-15 9 26)" fill="rgba(255,255,255,.65)"/>
        <ellipse cx="22" cy="16" rx="6" ry="9" fill="rgba(255,255,255,.65)"/>
        <ellipse cx="39" cy="16" rx="6" ry="9" fill="rgba(255,255,255,.65)"/>
        <ellipse cx="49" cy="31" rx="5.500" ry="8" transform="rotate(20 49 31)" fill="rgba(255,255,255,.65)"/>
        <path d="M29 27c6 0 9 6 14 10 7 5 10 12 5 19-4 5-12 5-19 5s-15 0-19-5c-5-7-2-14 5-19 5-4 8-10 14-10z" fill="rgba(255,255,255,.65)"/>
        <text x="29" y="58" text-anchor="middle" font-size="21" font-weight="700" fill="#c8c8c8" font-family="Liberation Sans, sans-serif">du</text>
      </svg>
      <span class="ps-jy">经验</span>
    </div>
    <div class="ps-wm2">jingyan.baidu.com</div>
  </div>
</div>
<script src="https://cdn.jsdelivr.net/npm/bootstrap@5.3.0/dist/js/bootstrap.bundle.min.js"></script>
</body>
</html>
